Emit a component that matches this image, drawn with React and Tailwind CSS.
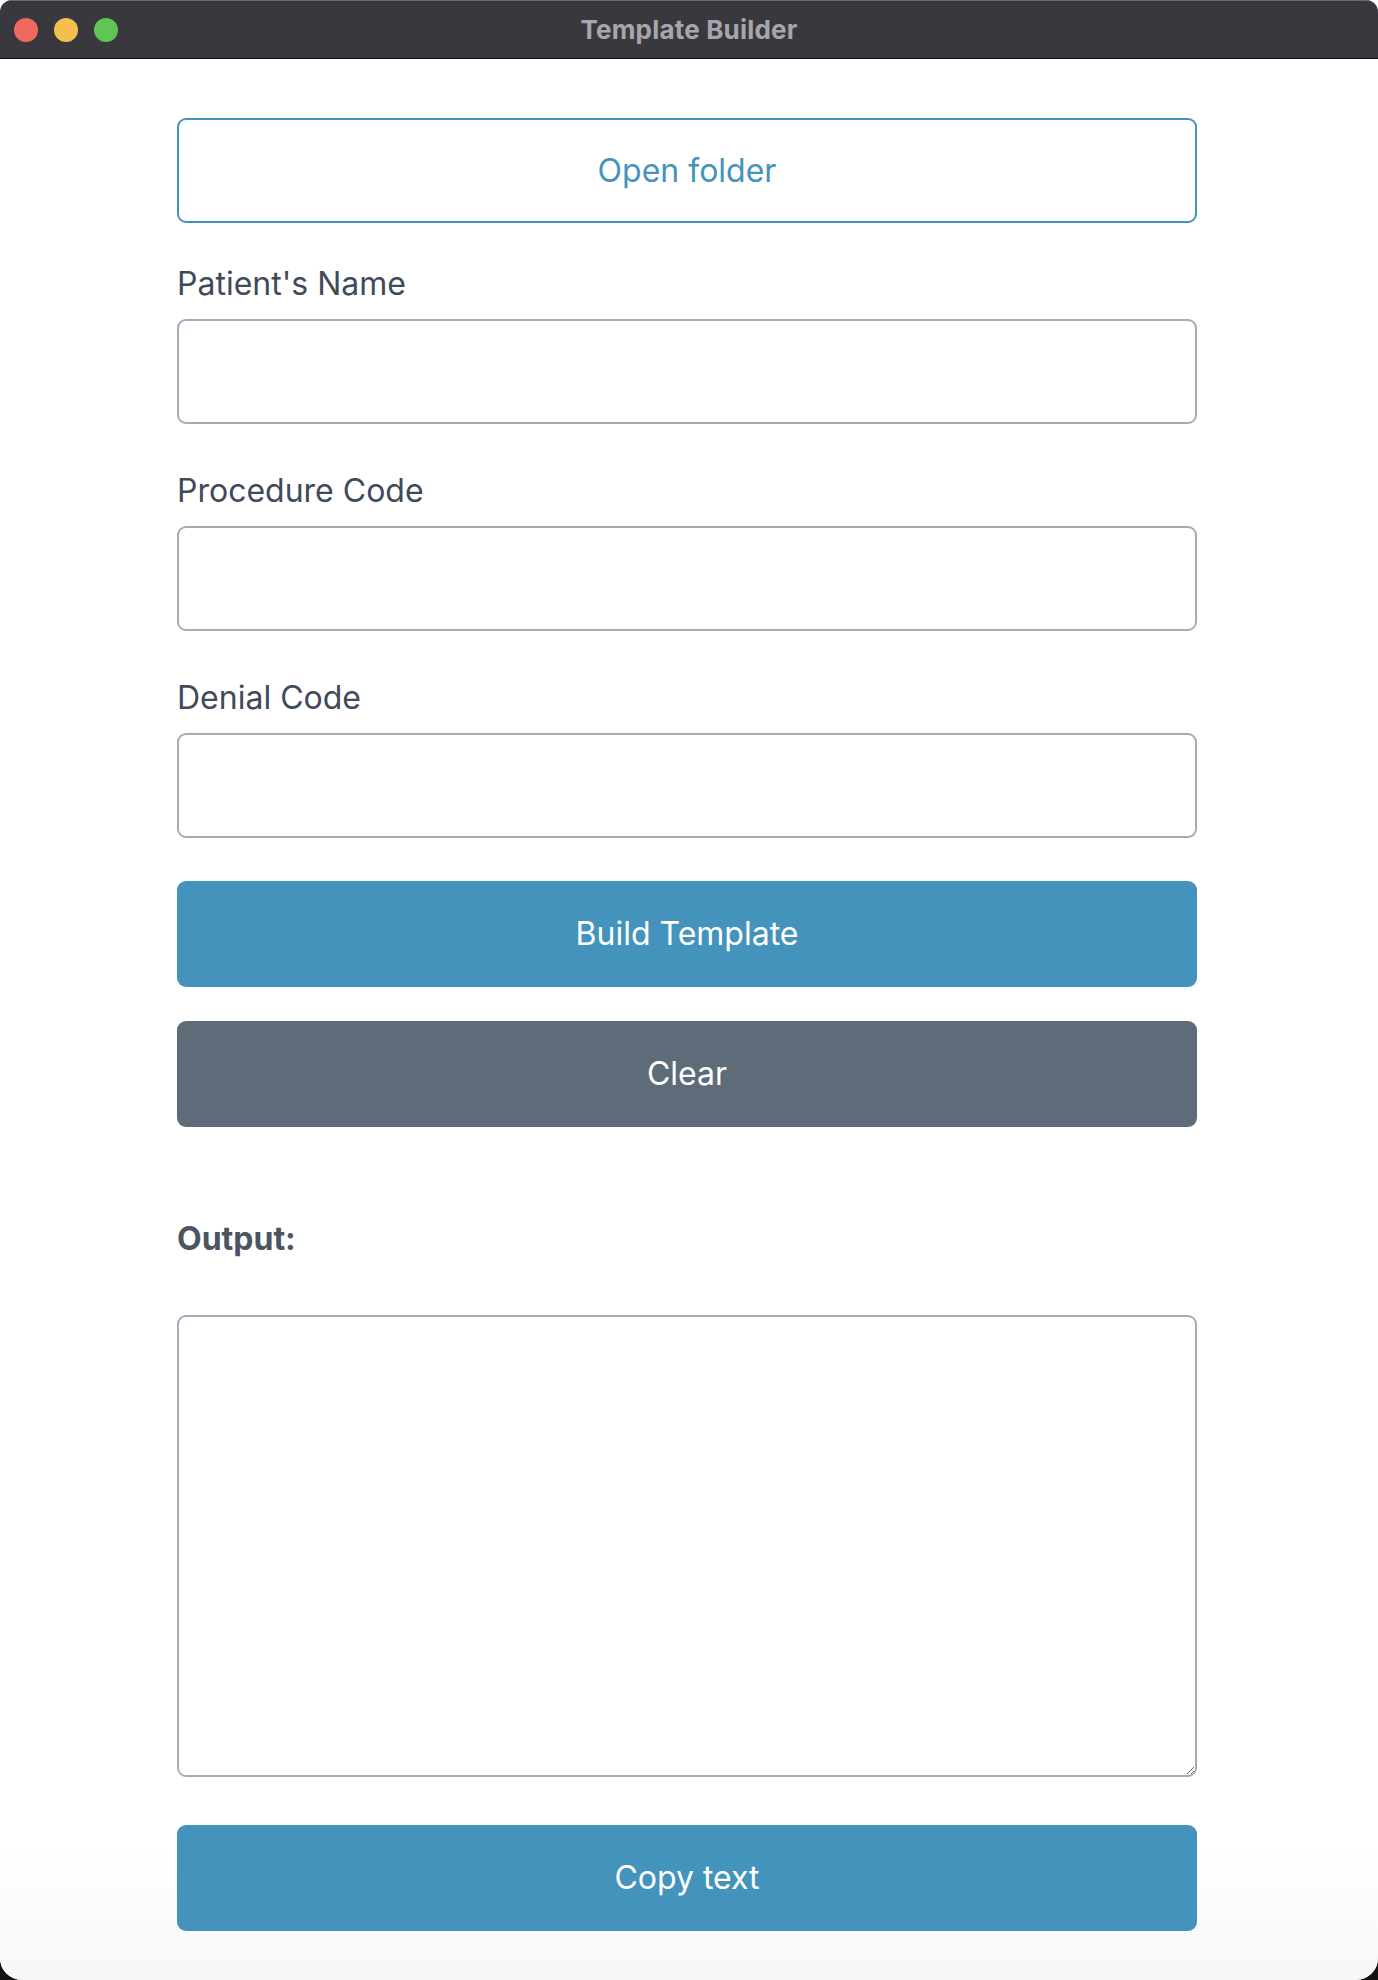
import { useState } from "react";

const Field = ({ label, value, onChange, first }) => (
  <div className="flex flex-col">
    <label
      className={`${first ? "mt-[37px]" : "mt-[43px]"} mb-[11px] text-[32px] leading-[48px] text-[#3f4a5a]`}
    >
      {label}
    </label>
    <input
      value={value}
      onChange={(e) => onChange(e.target.value)}
      className="h-[105px] w-full rounded-[9px] border-2 border-[#a3adb8] bg-white px-6 text-[32px] text-[#3f4a5a] outline-none"
    />
  </div>
);

const App = () => {
  const [name, setName] = useState("");
  const [procedure, setProcedure] = useState("");
  const [denial, setDenial] = useState("");
  const [output, setOutput] = useState("");

  const clear = () => {
    setName("");
    setProcedure("");
    setDenial("");
    setOutput("");
  };

  return (
    <div className="h-[1980px] w-[1378px] bg-[linear-gradient(to_bottom,#ffffff_50%,#111114_50%)] font-['Inter','Noto_Sans',sans-serif]">
      <div className="flex h-full flex-col overflow-hidden rounded-t-[12px] rounded-b-[22px] bg-white">
        {/* Title bar */}
        <div className="relative flex h-[59px] shrink-0 items-center justify-center border-t border-b border-t-[#6c6a70] border-b-[#0e0e10] bg-[#3a383f]">
          <div className="absolute left-[14px] top-[17px] flex gap-[16px]">
            <span className="h-[24px] w-[24px] rounded-full bg-[#ee6a5e]" />
            <span className="h-[24px] w-[24px] rounded-full bg-[#f5bf4f]" />
            <span className="h-[24px] w-[24px] rounded-full bg-[#61c554]" />
          </div>
          <span className="text-[26px] font-bold tracking-[0.2px] text-[#a8a6ac]">
            Template Builder
          </span>
        </div>

        {/* Main */}
        <div className="flex flex-1 bg-[linear-gradient(to_bottom,#ffffff_93%,#f7f7f7)] pl-[177px]">
          <div className="flex w-[1020px] flex-col pt-[59px]">
            <button className="h-[105px] w-full rounded-[9px] border-2 border-[#4493bd] bg-white text-[32px] text-[#4493bd]">
              Open folder
            </button>

            <Field label="Patient's Name" value={name} onChange={setName} first />
            <Field label="Procedure Code" value={procedure} onChange={setProcedure} />
            <Field label="Denial Code" value={denial} onChange={setDenial} />

            <button
              onClick={() =>
                setOutput(
                  name || procedure || denial
                    ? `Patient: ${name}\nProcedure: ${procedure}\nDenial: ${denial}`
                    : ""
                )
              }
              className="mt-[43px] h-[106px] w-full rounded-[9px] bg-[#4493bd] text-[32px] text-white"
            >
              Build Template
            </button>
            <button
              onClick={clear}
              className="mt-[34px] h-[106px] w-full rounded-[9px] bg-[#5e6b78] text-[32px] text-white"
            >
              Clear
            </button>

            <h3 className="mt-[88px] mb-[52px] text-[32px] font-bold leading-[48px] text-[#4a5563]">
              Output:
            </h3>
            <textarea
              value={output}
              onChange={(e) => setOutput(e.target.value)}
              className="h-[462px] w-full rounded-[9px] border-2 border-[#a3adb8] bg-white p-5 text-[28px] text-[#3f4a5a] outline-none"
            />

            <button
              onClick={() => navigator.clipboard?.writeText(output)}
              className="mt-[48px] h-[106px] w-full rounded-[9px] bg-[#4493bd] text-[32px] text-white"
            >
              Copy text
            </button>
          </div>
        </div>
      </div>
    </div>
  );
};

export default App;
